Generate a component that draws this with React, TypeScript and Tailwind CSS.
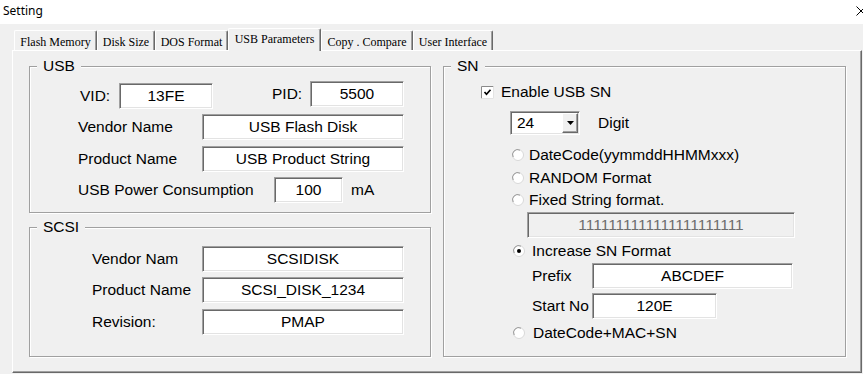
import React from "react";

const sunken =
  "border border-t-[#a0a0a0] border-l-[#a0a0a0] border-b-[#ffffff] border-r-[#ffffff] shadow-[inset_1px_1px_0_#696969,inset_-1px_-1px_0_#e3e3e3]";

function Field({
  w,
  children,
  disabled,
  className = "",
}: {
  w: string;
  children: React.ReactNode;
  disabled?: boolean;
  className?: string;
}) {
  return (
    <div
      className={`${w} h-[26px] ${sunken} ${
        disabled ? "bg-[#f0f0f0] text-[#6d6d6d]" : "bg-white text-black"
      } flex items-center justify-center leading-none ${className}`}
    >
      {children}
    </div>
  );
}

function Radio({ checked }: { checked?: boolean }) {
  return (
    <svg width="12" height="12" viewBox="0 0 12 12" className="shrink-0">
      <circle cx="6" cy="6" r="5.5" fill="#ffffff" stroke="#d8d8d8" strokeWidth="1" />
      <path d="M1.2 8 A5 5 0 0 1 8 1.2" fill="none" stroke="#9a9a9a" strokeWidth="1" />
      {checked && <circle cx="6" cy="6" r="2" fill="#000000" />}
    </svg>
  );
}

function Checkbox() {
  return (
    <svg width="13" height="13" viewBox="0 0 13 13" className="shrink-0">
      <rect x="0" y="0" width="13" height="13" fill="#ffffff" />
      <path d="M0.5 12.5 V0.5 H12.5" fill="none" stroke="#8a8a8a" strokeWidth="1" />
      <path d="M12.5 0.5 V12.5 H0.5" fill="none" stroke="#e3e3e3" strokeWidth="1" />
      <path d="M3.5 6 L5.5 8.2 L9.5 3.8" fill="none" stroke="#000000" strokeWidth="1.7" />
    </svg>
  );
}

function GroupBox({
  title,
  className,
  children,
}: {
  title: string;
  className: string;
  children: React.ReactNode;
}) {
  return (
    <div
      className={`relative border border-[#a0a0a0] shadow-[1px_1px_0_#ffffff,inset_1px_1px_0_#ffffff] ${className}`}
    >
      <span className="absolute left-[7px] top-[-10px] px-[6px] bg-[#f0f0f0] leading-[18px]">
        {title}
      </span>
      {children}
    </div>
  );
}

const tabs = [
  { label: "Flash Memory", w: "w-[83px]" },
  { label: "Disk Size", w: "w-[58px]" },
  { label: "DOS Format", w: "w-[73px]" },
  { label: "USB Parameters", w: "w-[93px]", active: true },
  { label: "Copy . Compare", w: "w-[92px]" },
  { label: "User Interface", w: "w-[80px]" },
];

export default function App() {
  return (
    <div
      className="w-[863px] h-[374px] bg-[#f0f0f0] overflow-hidden text-black"
      style={{ fontFamily: '"Liberation Sans", Arial, sans-serif' }}
    >
      {/* Title bar */}
      <div className="h-[24px] bg-white flex items-center justify-between pl-[3px]">
        <span
          className="text-[12px] leading-none pb-[2px]"
          style={{ fontFamily: '"Noto Sans", "Open Sans", sans-serif' }}
        >
          Setting
        </span>
        <svg width="10" height="10" viewBox="0 0 10 10" className="mr-[-3px] mb-[2px]">
          <path d="M0.5 0.5 L9.5 9.5 M9.5 0.5 L0.5 9.5" stroke="#000" strokeWidth="1" />
        </svg>
      </div>

      <div className="pl-[12px] pr-[1px]">
        {/* Tab strip */}
        <div
          className="h-[26px] flex items-end pl-[2px] relative z-10"
          style={{ fontFamily: '"Liberation Serif", "Times New Roman", serif' }}
        >
          {tabs.map((t) =>
            t.active ? (
              <div
                key={t.label}
                className={`${t.w} h-[23px] mb-[-1px] bg-[#f0f0f0] border-t border-l border-white border-r border-r-[#696969] shadow-[inset_-1px_0_0_#a0a0a0] rounded-t-[2px] flex items-start justify-center pt-[3px] text-[12px] leading-[14px]`}
              >
                {t.label}
              </div>
            ) : (
              <div
                key={t.label}
                className={`${t.w} h-[20px] bg-[#f0f0f0] border-t border-l border-white border-r border-r-[#696969] shadow-[inset_-1px_0_0_#a0a0a0] rounded-t-[2px] flex items-center justify-center pt-[3px] text-[12px] leading-[14px]`}
              >
                {t.label}
              </div>
            )
          )}
        </div>

        {/* Panel */}
        <div className="h-[323px] border-t border-l border-white border-r border-b border-r-[#696969] border-b-[#696969] shadow-[inset_-1px_-1px_0_#a0a0a0] flex gap-[12px] pl-[16px] pt-[15px] text-[15.5px]">
          {/* Left column */}
          <div className="w-[402px] flex flex-col gap-[14px]">
            <GroupBox title="USB" className="h-[147px] pt-[14px]">
              <div className="flex items-start h-[28px] pl-[50px]">
                <div className="flex items-center mt-[2px]">
                  <span className="w-[39px]">VID:</span>
                  <Field w="w-[94px]">13FE</Field>
                </div>
                <div className="flex items-center ml-[59px]">
                  <span className="w-[38px]">PID:</span>
                  <Field w="w-[94px]">5500</Field>
                </div>
              </div>
              <div className="flex items-center h-[26px] pl-[48px] mt-[5px]">
                <span className="w-[124px]">Vendor Name</span>
                <Field w="w-[202px]">USB Flash Disk</Field>
              </div>
              <div className="flex items-center h-[26px] pl-[48px] mt-[6px]">
                <span className="w-[124px]">Product Name</span>
                <Field w="w-[202px]">USB Product String</Field>
              </div>
              <div className="flex items-center h-[26px] pl-[48px] mt-[5px]">
                <span className="w-[196px]">USB Power Consumption</span>
                <Field w="w-[69px]">100</Field>
                <span className="ml-[8px]">mA</span>
              </div>
            </GroupBox>

            <GroupBox title="SCSI" className="h-[130px] pt-[18px]">
              <div className="flex items-center h-[26px] pl-[62px]">
                <span className="w-[110px]">Vendor Nam</span>
                <Field w="w-[202px]">SCSIDISK</Field>
              </div>
              <div className="flex items-center h-[26px] pl-[62px] mt-[5px]">
                <span className="w-[110px]">Product Name</span>
                <Field w="w-[202px]">SCSI_DISK_1234</Field>
              </div>
              <div className="flex items-center h-[26px] pl-[62px] mt-[6px]">
                <span className="w-[110px]">Revision:</span>
                <Field w="w-[202px]">PMAP</Field>
              </div>
            </GroupBox>
          </div>

          {/* Right column */}
          <GroupBox title="SN" className="w-[403px] h-[291px] pt-[13px] flex flex-col">
            <div className="flex items-center h-[24px] pl-[37px]">
              <Checkbox />
              <span className="ml-[7px]">Enable USB SN</span>
            </div>
            <div className="flex items-center h-[24px] pl-[66px] mt-[7px]">
              <div className={`w-[70px] h-[24px] bg-white ${sunken} flex items-center justify-between pl-[6px] pr-[1px]`}>
                <span className="leading-none">24</span>
                <div className="w-[16px] h-[20px] bg-[#f0f0f0] border border-t-white border-l-white border-b-[#696969] border-r-[#696969] shadow-[inset_-1px_-1px_0_#a0a0a0] flex items-center justify-center">
                  <svg width="7" height="4" viewBox="0 0 7 4">
                    <path d="M0 0 H7 L3.5 4 Z" fill="#000" />
                  </svg>
                </div>
              </div>
              <span className="ml-[18px]">Digit</span>
            </div>
            <div className="flex items-center h-[22px] pl-[68px] mt-[9px]">
              <Radio />
              <span className="ml-[5px]">DateCode(yymmddHHMMxxx)</span>
            </div>
            <div className="flex items-center h-[22px] pl-[68px] mt-[1px]">
              <Radio />
              <span className="ml-[5px]">RANDOM Format</span>
            </div>
            <div className="flex items-center h-[22px] pl-[68px]">
              <Radio />
              <span className="ml-[5px]">Fixed String format.</span>
            </div>
            <div className="flex items-center h-[25px] pl-[83px] mt-[1px]">
              <Field w="w-[268px]" disabled className="h-[25px]">
                1111111111111111111111
              </Field>
            </div>
            <div className="flex items-center h-[22px] pl-[69px] mt-[3px]">
              <Radio checked />
              <span className="ml-[7px]">Increase SN Format</span>
            </div>
            <div className="flex items-center h-[25px] pl-[88px] mt-[1px]">
              <span className="w-[60px]">Prefix</span>
              <Field w="w-[201px]" className="h-[25px]">ABCDEF</Field>
            </div>
            <div className="flex items-center h-[25px] pl-[88px] mt-[5px]">
              <span className="w-[60px]">Start No</span>
              <Field w="w-[125px]" className="h-[25px]">120E</Field>
            </div>
            <div className="flex items-center h-[22px] pl-[69px] mt-[4px]">
              <Radio />
              <span className="ml-[8px]">DateCode+MAC+SN</span>
            </div>
          </GroupBox>
        </div>
      </div>
    </div>
  );
}
